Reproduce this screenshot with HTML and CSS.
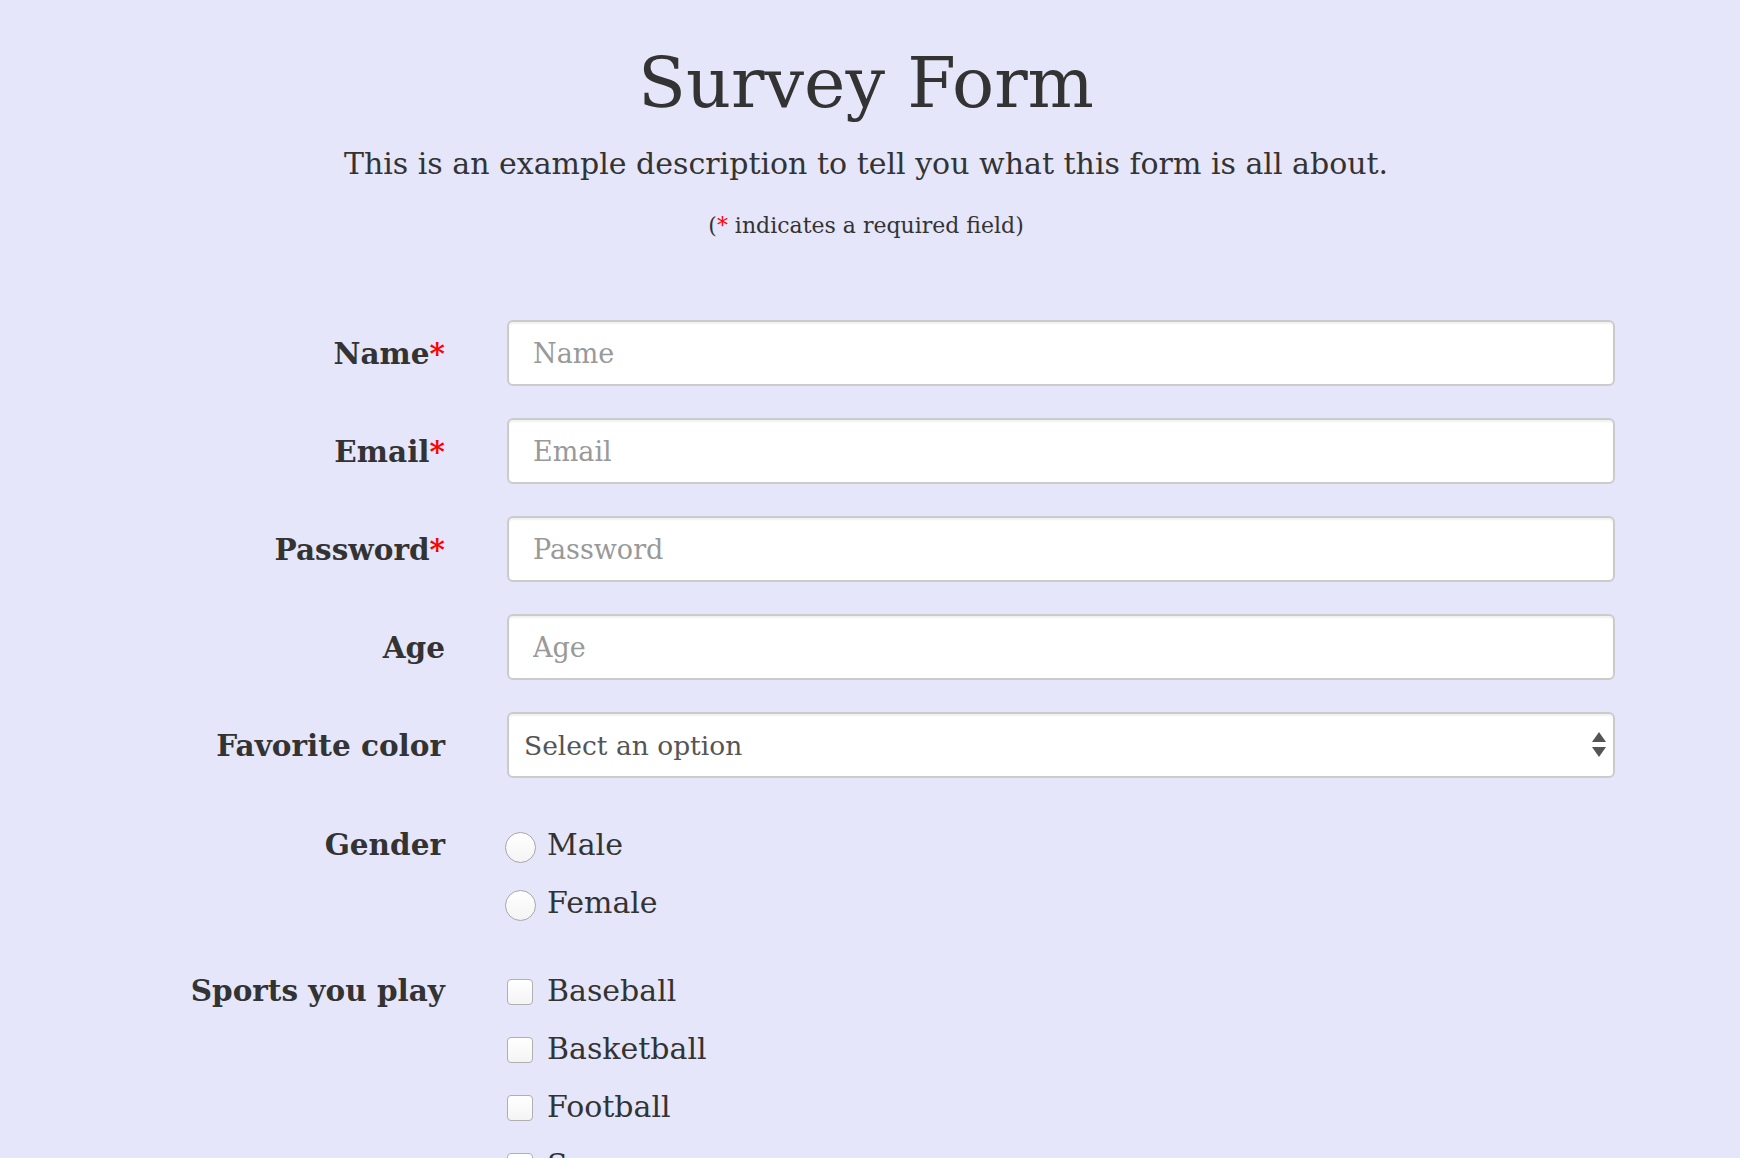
FILE: index.html
```html
<!DOCTYPE html>
<html lang="en">
<head>
<meta charset="utf-8">
<title>Survey Form</title>
<link rel="stylesheet" href="styles.css">
</head>
<body>
<div class="page">
  <header class="header">
    <h1 class="title">Survey Form</h1>
    <p class="description">This is an example description to tell you what this form is all about.</p>
    <p class="required-note">(<span class="req">*</span> indicates a required field)</p>
  </header>

  <form class="survey">
    <div class="row">
      <label class="label" for="name">Name<span class="req">*</span></label>
      <div class="control"><input class="field" id="name" type="text" placeholder="Name"></div>
    </div>
    <div class="row">
      <label class="label" for="email">Email<span class="req">*</span></label>
      <div class="control"><input class="field" id="email" type="email" placeholder="Email"></div>
    </div>
    <div class="row">
      <label class="label" for="password">Password<span class="req">*</span></label>
      <div class="control"><input class="field" id="password" type="password" placeholder="Password"></div>
    </div>
    <div class="row">
      <label class="label" for="age">Age</label>
      <div class="control"><input class="field" id="age" type="text" placeholder="Age"></div>
    </div>
    <div class="row">
      <label class="label" for="color">Favorite color</label>
      <div class="control select-wrap">
        <select class="field select" id="color">
          <option>Select an option</option>
          <option>Red</option>
          <option>Green</option>
          <option>Blue</option>
        </select>
        <svg class="select-arrows" width="14" height="26" viewBox="0 0 14 26" aria-hidden="true">
          <path d="M7 0 L14 10 L0 10 Z" fill="#555"/>
          <path d="M0 15 L14 15 L7 25 Z" fill="#555"/>
        </svg>
      </div>
    </div>
    <div class="row row-list row-gender">
      <div class="label label-list">Gender</div>
      <div class="control options">
        <label class="option"><input class="radio" type="radio" name="gender" value="male"><span>Male</span></label>
        <label class="option"><input class="radio" type="radio" name="gender" value="female"><span>Female</span></label>
      </div>
    </div>
    <div class="row row-list row-sports">
      <div class="label label-list">Sports you play</div>
      <div class="control options">
        <label class="option"><input class="check" type="checkbox" value="baseball"><span>Baseball</span></label>
        <label class="option"><input class="check" type="checkbox" value="basketball"><span>Basketball</span></label>
        <label class="option"><input class="check" type="checkbox" value="football"><span>Football</span></label>
        <label class="option"><input class="check" type="checkbox" value="soccer"><span>Soccer</span></label>
      </div>
    </div>
  </form>
</div>
</body>
</html>
```

FILE: styles.css
```css
html, body {
  margin: 0;
  padding: 0;
}

body {
  background: #e6e6fa;
  color: #333;
  font-family: "DejaVu Serif", "Liberation Serif", serif;
}

.page {
  padding-right: 8px;
}

.header {
  text-align: center;
  padding-top: 48px;
}

.title {
  margin: 0;
  font-size: 70px;
  line-height: 1;
  font-weight: normal;
}

.description {
  margin: 31px 0 0;
  font-size: 30px;
  line-height: 1;
}

.required-note {
  margin: 36px 0 0;
  font-size: 22px;
  line-height: 1;
}

.req {
  color: #f00;
}

.survey {
  width: 1498px;
  margin: 83px auto 0;
}

.row {
  display: flex;
  align-items: center;
  margin-bottom: 32px;
}

.label {
  flex: none;
  width: 328px;
  margin-right: 62px;
  text-align: right;
  font-weight: bold;
  font-size: 29.5px;
  color: #333;
}

.control {
  flex: 1;
  min-width: 0;
}

.field {
  display: block;
  box-sizing: border-box;
  width: 100%;
  height: 66px;
  margin: 0;
  padding: 0 0 0 24px;
  border: 2px solid #cbcbcb;
  border-radius: 6px;
  background: #fff;
  box-shadow: inset 0 2px 2px rgba(0, 0, 0, 0.06);
  font-family: "DejaVu Serif", "Liberation Serif", serif;
  font-size: 27px;
  color: #555;
  outline: none;
}

.field::placeholder {
  color: #999;
}

.select-wrap {
  position: relative;
}

.select {
  appearance: none;
  -webkit-appearance: none;
  padding-left: 15px;
  font-size: 26.5px;
  color: #555;
}

.select-arrows {
  position: absolute;
  right: 9px;
  top: 20px;
  pointer-events: none;
}

.row-list {
  align-items: flex-start;
}

.row-gender {
  margin-top: 38px;
  margin-bottom: 30px;
}

.label-list {
  line-height: 58px;
}

.options {
  display: flex;
  flex-direction: column;
}

.option {
  display: flex;
  align-items: center;
  height: 58px;
  font-size: 30px;
  line-height: 58px;
  color: #333;
}

.radio {
  appearance: none;
  -webkit-appearance: none;
  flex: none;
  box-sizing: border-box;
  width: 31px;
  height: 31px;
  margin: 5px 11px 0 -2px;
  border: 1px solid #a8a8a8;
  border-radius: 50%;
  background: linear-gradient(#ffffff, #f4f4f4);
}

.check {
  appearance: none;
  -webkit-appearance: none;
  flex: none;
  box-sizing: border-box;
  width: 26px;
  height: 26px;
  margin: 2px 14px 0 0;
  border: 1px solid #b0b0b0;
  border-radius: 4px;
  background: linear-gradient(#ffffff, #f4f4f4);
}
```
